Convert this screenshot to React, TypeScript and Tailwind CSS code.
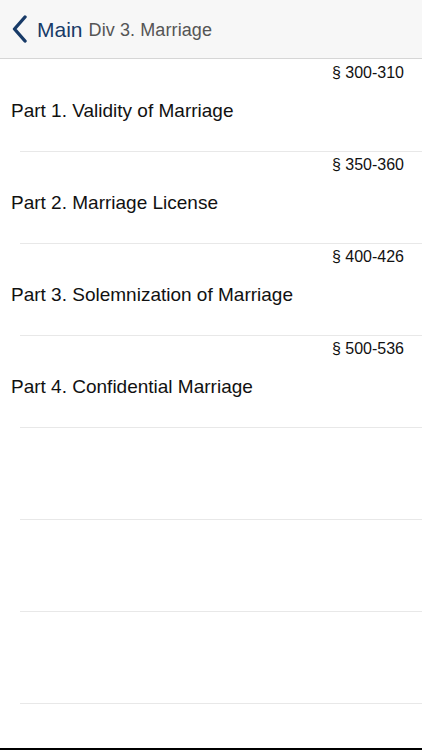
import React from 'react';

const parts = [
  { range: '§ 300-310', title: 'Part 1. Validity of Marriage' },
  { range: '§ 350-360', title: 'Part 2. Marriage License' },
  { range: '§ 400-426', title: 'Part 3. Solemnization of Marriage' },
  { range: '§ 500-536', title: 'Part 4. Confidential Marriage' },
  { range: '', title: '' },
  { range: '', title: '' },
  { range: '', title: '' },
];

const App: React.FC = () => {
  return (
    <div className="w-[422px] h-[750px] bg-white flex flex-col overflow-hidden" style={{ fontFamily: '"Liberation Sans", Arial, sans-serif' }}>
      <header className="h-[59px] shrink-0 bg-[#f7f7f7] border-b border-[#d6d6d6] flex items-center pl-[11px]">
        <button className="flex items-center text-[#183b68]">
          <svg width="17" height="28" viewBox="0 0 17 28" fill="none" className="mr-[9px]">
            <path d="M14 2 L3.5 14 L14 26" stroke="#183b68" strokeWidth="3.4" strokeLinecap="round" strokeLinejoin="round" />
          </svg>
          <span className="text-[21px] leading-none">Main</span>
        </button>
        <span className="ml-[6px] text-[18px] leading-none text-[#555555] mt-[2px] tracking-[0.1px]">Div 3. Marriage</span>
      </header>

      <main className="flex-1 flex flex-col pt-px">
        {parts.map((p, i) => (
          <div key={i} className="h-[92px] shrink-0 flex flex-col">
            <div className="h-[26px] pt-[3px] pr-[18px] text-right text-[16px] leading-[20px] text-[#111]">{p.range}</div>
            <div className="pl-[11px] pt-[14px] text-[19px] leading-[22px] text-[#111]">{p.title}</div>
            <div className="mt-auto ml-[20px] h-px bg-[#e8e8e8]" />
          </div>
        ))}
      </main>
      <div className="h-[2px] shrink-0 bg-black" />
    </div>
  );
};

export default App;
